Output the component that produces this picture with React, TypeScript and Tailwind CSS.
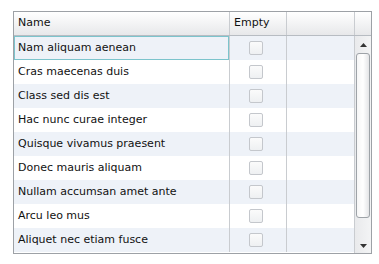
const rows = [
  "Nam aliquam aenean",
  "Cras maecenas duis",
  "Class sed dis est",
  "Hac nunc curae integer",
  "Quisque vivamus praesent",
  "Donec mauris aliquam",
  "Nullam accumsan amet ante",
  "Arcu leo mus",
  "Aliquet nec etiam fusce",
];

function CheckBox() {
  return (
    <div className="w-[14px] h-[14px] rounded-[2px] border border-[#c4c7cc] bg-gradient-to-b from-[#fbfbfb] to-[#eef0f2]" />
  );
}

function Arrow({ up }: { up?: boolean }) {
  return (
    <svg width="7" height="4" viewBox="0 0 7 4">
      <path d={up ? "M0 4 L3.5 0 L7 4 Z" : "M0 0 L3.5 4 L7 0 Z"} fill="#333" />
    </svg>
  );
}

export default function App() {
  return (
    <div className="w-[379px] h-[264px] bg-white pt-[11px] pl-[13px]" style={{ fontFamily: '"DejaVu Sans", Tahoma, sans-serif' }}>
      <div className="w-[359px] h-[243px] border border-[#9da1a6] flex flex-col text-[11px] text-[#111]">
        {/* header */}
        <div className="flex h-[24px] border-b border-[#b7bcc2] bg-gradient-to-b from-[#ffffff] to-[#e7e8ea] shrink-0">
          <div className="w-[216px] border-r border-[#c9ccd0] pl-[4px] flex items-center">Name</div>
          <div className="w-[57px] border-r border-[#c9ccd0] pl-[4px] flex items-center">Empty</div>
          <div className="w-[68px] border-r border-[#c9ccd0]" />
          <div className="w-[16px]" />
        </div>
        {/* body */}
        <div className="flex flex-1 min-h-0">
          <div className="flex flex-col w-[340px]">
            {rows.map((r, i) => (
              <div key={r} className={`flex h-[24px] shrink-0 ${i % 2 === 0 ? "bg-[#eef2f8]" : "bg-white"}`}>
                <div
                  className={`w-[215px] flex items-center ${i === 0 ? "border border-[#7cc4cc] pl-[3px]" : "pl-[4px]"}`}
                >
                  {r}
                </div>
                <div className="w-[1px] bg-[#c9ccd0]" />
                <div className="w-[56px] flex items-center pl-[19px]">
                  <CheckBox />
                </div>
                <div className="w-[1px] bg-[#c9ccd0]" />
                <div className="w-[67px]" />
              </div>
            ))}
          </div>
          {/* scrollbar */}
          <div className="w-[17px] border-l border-[#c9ccd0] bg-gradient-to-r from-[#e9eaec] to-[#f3f4f5] flex flex-col items-center">
            <div className="h-[16px] flex items-center justify-center mt-[1px]">
              <Arrow up />
            </div>
            <div className="w-[14px] h-[165px] rounded-[3px] border border-[#9ea3a8] bg-gradient-to-r from-[#f6f6f6] via-[#ffffff] to-[#e4e5e7]" />
            <div className="flex-1 flex items-end pb-[5px]">
              <Arrow />
            </div>
          </div>
        </div>
      </div>
    </div>
  );
}
